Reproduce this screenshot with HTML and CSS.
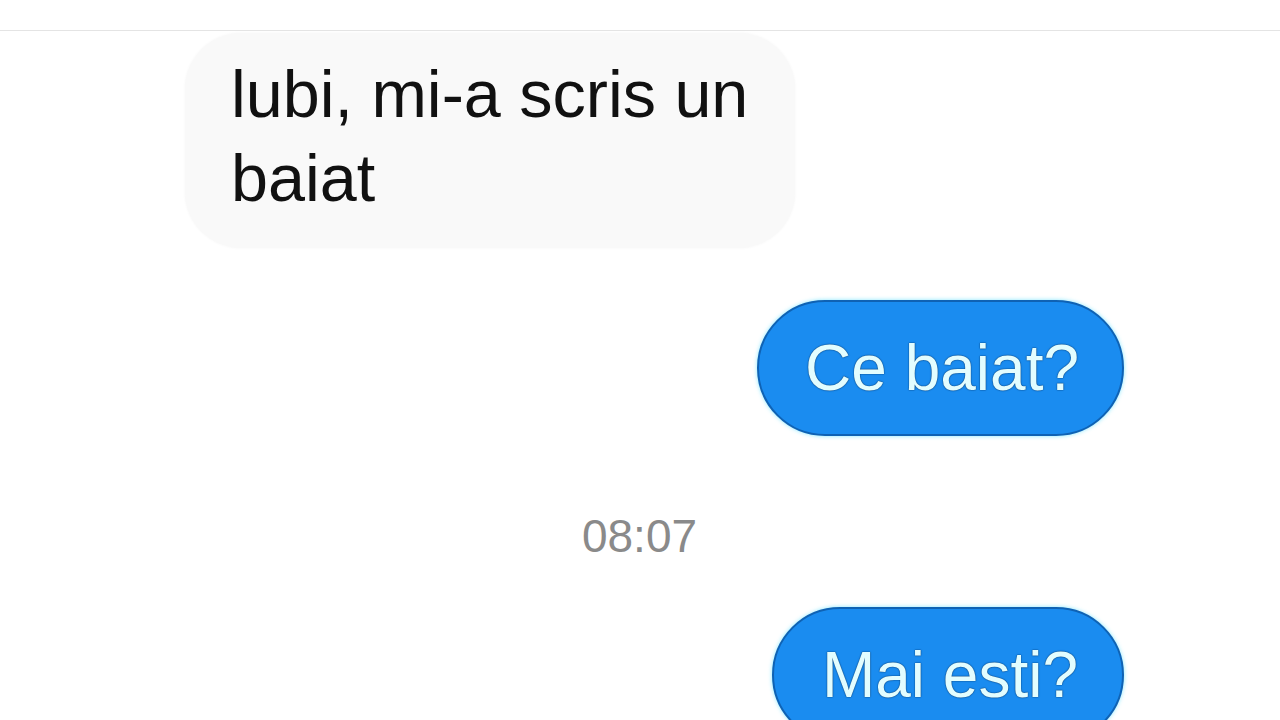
FILE: index.html
```html
<!DOCTYPE html>
<html lang="ro">
<head>
<meta charset="utf-8">
<title>Chat</title>
<link rel="stylesheet" href="styles.css">
</head>
<body>
<div class="topbar"></div>
<main class="chat">
  <div class="bubble incoming">lubi, mi-a scris un baiat</div>
  <div class="bubble outgoing first">Ce baiat?</div>
  <div class="timestamp">08:07</div>
  <div class="bubble outgoing second">Mai esti?</div>
</main>
</body>
</html>
```
FILE: styles.css
```css
html, body {
  margin: 0;
  padding: 0;
  background: #ffffff;
  width: 1280px;
  height: 720px;
  overflow: hidden;
  font-family: "Liberation Sans", Arial, sans-serif;
}

.topbar {
  height: 31px;
  border-bottom: 1px solid #e4e4e4;
  box-sizing: border-box;
}

.chat {
  display: flex;
  flex-direction: column;
  padding: 2px 156px 0 185px;
}

.bubble {
  box-sizing: border-box;
}

.incoming {
  align-self: flex-start;
  width: 610px;
  background: #f9f9f9;
  color: #111111;
  font-size: 66.5px;
  line-height: 84px;
  padding: 19px 40px 28px 46px;
  border-radius: 56px;
  box-shadow: 0 0 3px rgba(0, 0, 0, 0.04);
}

.outgoing {
  align-self: flex-end;
  background: #1a8cf0;
  border: 2px solid #0f62b4;
  color: #e2fdff;
  font-size: 64px;
  line-height: 72px;
  padding: 30px 43px 30px 46px;
  border-radius: 70px;
  box-shadow: 0 0 4px rgba(120, 230, 255, 0.9);
  text-shadow: 0 0 1.5px rgba(5, 50, 100, 1), 0 0 1px rgba(5, 50, 100, 0.8);
  white-space: nowrap;
}

.first {
  margin-top: 52px;
}

.timestamp {
  align-self: center;
  margin: 74px 0 0 -30px;
  font-size: 46px;
  line-height: 53px;
  color: #8a8a8a;
}

.second {
  margin-top: 44px;
  padding-right: 44px;
  padding-left: 48px;
}
```
